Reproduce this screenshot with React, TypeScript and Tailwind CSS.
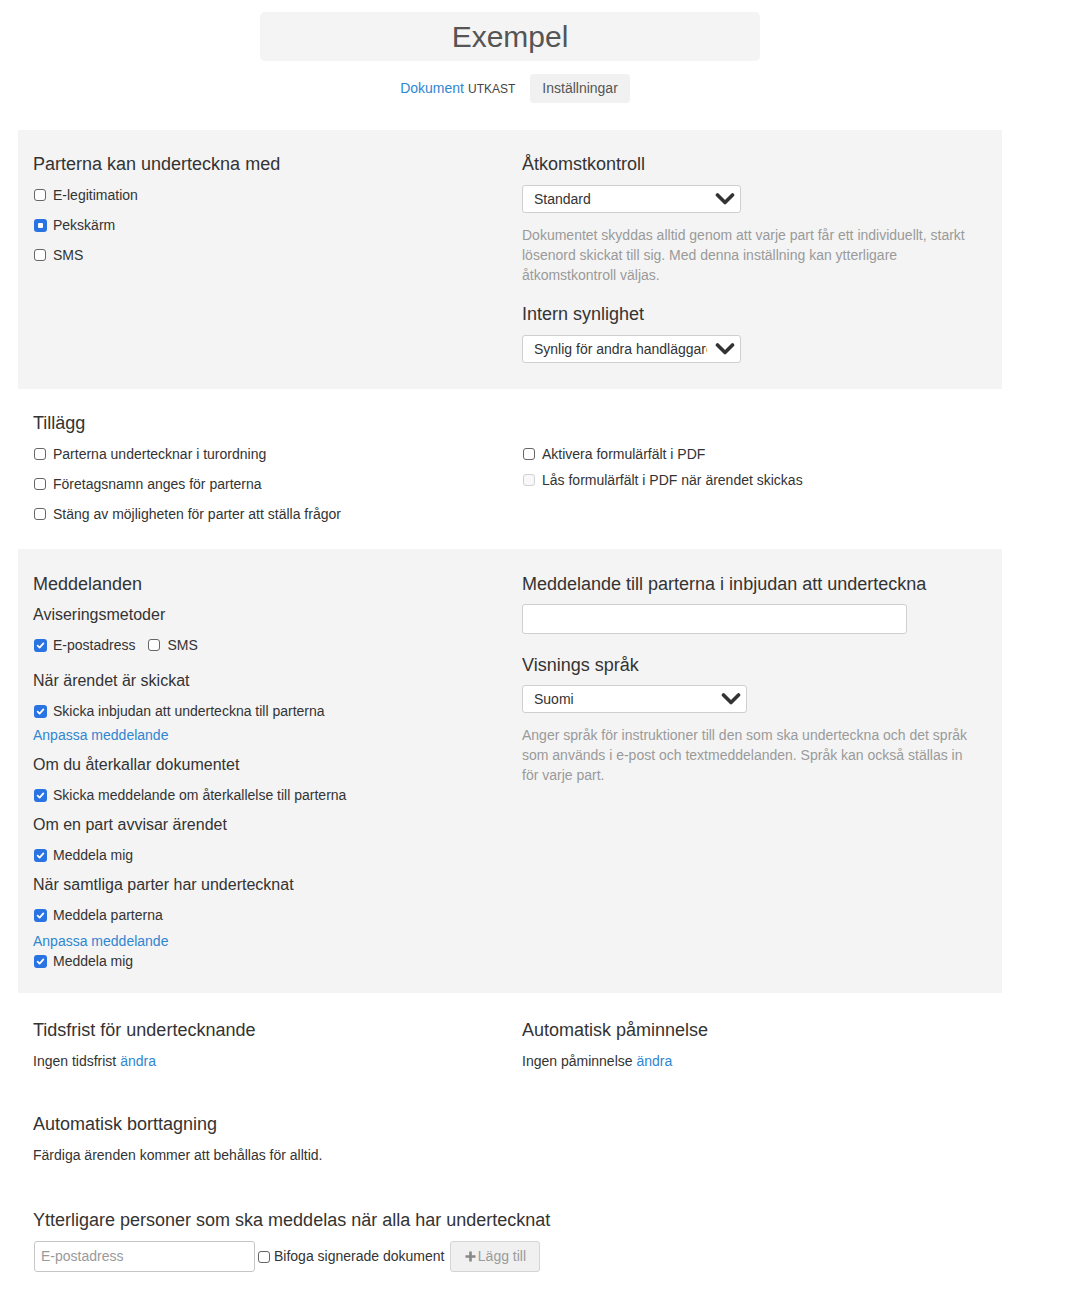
import React from "react";

const Box = ({ state }: { state: "on" | "off" | "radio" | "disabled" }) => {
  if (state === "on")
    return (
      <span className="inline-flex w-[13px] h-[13px] rounded-[3px] bg-[#2a73e3] items-center justify-center shrink-0 -mr-px">
        <svg width="9" height="9" viewBox="0 0 10 10">
          <path d="M1.8 5.2 L4 7.4 L8.2 2.6" fill="none" stroke="white" strokeWidth="1.9" strokeLinecap="round" strokeLinejoin="round" />
        </svg>
      </span>
    );
  if (state === "radio")
    return (
      <span className="inline-flex w-[13px] h-[13px] rounded-[3px] bg-[#2a73e3] items-center justify-center shrink-0 -mr-px">
        <span className="w-[5px] h-[5px] bg-white rounded-[1px]" />
      </span>
    );
  if (state === "disabled")
    return <span className="inline-block w-[12px] h-[12px] rounded-[3px] border-[1.5px] border-[#d0d0d0] bg-[#f8f8f8] shrink-0" />;
  return <span className="inline-block w-[12px] h-[12px] rounded-[3px] border-[1.5px] border-[#666] bg-white shrink-0" />;
};

const Check = ({ state = "off", label, className = "" }: { state?: "on" | "off" | "radio" | "disabled"; label: string; className?: string }) => (
  <div className={`flex items-center h-[20px] leading-[20px] text-[14px] text-[#333] pl-px gap-[7px] ${className}`}>
    <Box state={state} />
    <span>{label}</span>
  </div>
);

const H = ({ children, className = "" }: { children: React.ReactNode; className?: string }) => (
  <div className={`text-[18px] leading-[20px] text-[#333] ${className}`}>{children}</div>
);
const Sub = ({ children, className = "" }: { children: React.ReactNode; className?: string }) => (
  <div className={`text-[16px] leading-[20px] text-[#333] ${className}`}>{children}</div>
);
const Link = ({ children, className = "" }: { children: React.ReactNode; className?: string }) => (
  <div className={`text-[14px] leading-[20px] text-[#2f86d1] ${className}`}>{children}</div>
);
const Help = ({ children, className = "" }: { children: React.ReactNode; className?: string }) => (
  <div className={`text-[14px] leading-[20px] text-[#9a9a9a] ${className}`}>{children}</div>
);

const Chevron = () => (
  <svg width="20" height="14" viewBox="0 0 20 14" className="shrink-0 ml-[8px]">
    <polyline points="2.5,3 10,10.5 17.5,3" fill="none" stroke="#333" strokeWidth="3.6" strokeLinecap="round" strokeLinejoin="round" />
  </svg>
);

const Select = ({ value, width, className = "" }: { value: string; width: string; className?: string }) => (
  <div className={`h-[28px] ${width} bg-white border-[1.5px] border-[#cfcfcf] rounded-[3px] flex items-center pl-[11px] pr-[5px] ${className}`}>
    <span className="flex-1 overflow-hidden whitespace-nowrap text-[14px] text-[#333]">{value}</span>
    <Chevron />
  </div>
);

export default function App() {
  return (
    <div className="w-[1076px] min-h-[1310px] bg-white" style={{ fontFamily: '"Liberation Sans", Arial, sans-serif' }}>
      <div className="w-[1020px]">
        {/* Title */}
        <div className="pt-[12px] flex justify-center">
          <div className="w-[500px] h-[49px] bg-[#f4f4f4] rounded-[5px] flex items-center justify-center text-[30px] text-[#555]">Exempel</div>
        </div>
        {/* Tabs */}
        <div className="mt-[13px] flex justify-center items-center h-[29px] pl-[10px]">
          <div className="flex items-baseline mr-[15px]">
            <span className="text-[14px] text-[#2f86d1]">Dokument</span>
            <span className="text-[12px] text-[#444] ml-[4px]">UTKAST</span>
          </div>
          <div className="h-[29px] px-[12px] flex items-center bg-[#f1f1f1] rounded-[4px] text-[14px] text-[#555]">Inställningar</div>
        </div>
      </div>

      <div className="w-[984px] ml-[18px] mt-[27px]">
        {/* Section 1 */}
        <div className="bg-[#f4f4f4] grid grid-cols-2">
          <div className="pl-[15px] pt-[24px]">
            <H>Parterna kan underteckna med</H>
            <Check className="mt-[11px]" label="E-legitimation" />
            <Check className="mt-[10px]" state="radio" label="Pekskärm" />
            <Check className="mt-[10px]" label="SMS" />
          </div>
          <div className="pl-[12px] pt-[24px] pb-[26px]">
            <H>Åtkomstkontroll</H>
            <Select className="mt-[11px]" width="w-[219px]" value="Standard" />
            <Help className="mt-[12px] pr-[20px]">
              Dokumentet skyddas alltid genom att varje part får ett individuellt, starkt lösenord skickat till sig. Med denna inställning kan ytterligare åtkomstkontroll väljas.
            </Help>
            <H className="mt-[19px]">Intern synlighet</H>
            <Select className="mt-[11px]" width="w-[219px]" value="Synlig för andra handläggare" />
          </div>
        </div>

        {/* Section 2 */}
        <div className="grid grid-cols-2">
          <div className="pl-[15px] pt-[24px] pb-[24px]">
            <H>Tillägg</H>
            <Check className="mt-[11px]" label="Parterna undertecknar i turordning" />
            <Check className="mt-[10px]" label="Företagsnamn anges för parterna" />
            <Check className="mt-[10px]" label="Stäng av möjligheten för parter att ställa frågor" />
          </div>
          <div className="pl-[12px] pt-[55px]">
            <Check label="Aktivera formulärfält i PDF" />
            <Check className="mt-[6px]" state="disabled" label="Lås formulärfält i PDF när ärendet skickas" />
          </div>
        </div>

        {/* Section 3 */}
        <div className="bg-[#f4f4f4] grid grid-cols-2 mt-px">
          <div className="pl-[15px] pt-[25px] pb-[22px]">
            <H>Meddelanden</H>
            <Sub className="mt-[11px]">Aviseringsmetoder</Sub>
            <div className="flex items-center mt-[10px]">
              <Check state="on" label="E-postadress" />
              <Check className="ml-[12px]" label="SMS" />
            </div>
            <Sub className="mt-[16px]">När ärendet är skickat</Sub>
            <Check className="mt-[10px]" state="on" label="Skicka inbjudan att underteckna till parterna" />
            <Link className="mt-[4px]">Anpassa meddelande</Link>
            <Sub className="mt-[10px]">Om du återkallar dokumentet</Sub>
            <Check className="mt-[10px]" state="on" label="Skicka meddelande om återkallelse till parterna" />
            <Sub className="mt-[10px]">Om en part avvisar ärendet</Sub>
            <Check className="mt-[10px]" state="on" label="Meddela mig" />
            <Sub className="mt-[10px]">När samtliga parter har undertecknat</Sub>
            <Check className="mt-[10px]" state="on" label="Meddela parterna" />
            <Link className="mt-[6px]">Anpassa meddelande</Link>
            <Check state="on" label="Meddela mig" />
          </div>
          <div className="pl-[12px] pt-[25px]">
            <H>Meddelande till parterna i inbjudan att underteckna</H>
            <div className="mt-[10px] w-[385px] h-[30px] bg-white border-[1.5px] border-[#cfcfcf] rounded-[3px]" />
            <H className="mt-[21px]">Visnings språk</H>
            <Select className="mt-[10px]" width="w-[225px]" value="Suomi" />
            <Help className="mt-[12px] pr-[20px]">
              Anger språk för instruktioner till den som ska underteckna och det språk som används i e-post och textmeddelanden. Språk kan också ställas in för varje part.
            </Help>
          </div>
        </div>

        {/* Section 4 */}
        <div className="grid grid-cols-2 pt-[27px]">
          <div className="pl-[15px]">
            <H>Tidsfrist för undertecknande</H>
            <div className="mt-[11px] text-[14px] leading-[20px] text-[#333]">
              Ingen tidsfrist <span className="text-[#2f86d1]">ändra</span>
            </div>
          </div>
          <div className="pl-[12px]">
            <H>Automatisk påminnelse</H>
            <div className="mt-[11px] text-[14px] leading-[20px] text-[#333]">
              Ingen påminnelse <span className="text-[#2f86d1]">ändra</span>
            </div>
          </div>
        </div>
        <div className="pl-[15px] mt-[43px]">
          <H>Automatisk borttagning</H>
          <div className="mt-[11px] text-[14px] leading-[20px] text-[#333]">Färdiga ärenden kommer att behållas för alltid.</div>
        </div>
        <div className="pl-[15px] mt-[45px]">
          <H>Ytterligare personer som ska meddelas när alla har undertecknat</H>
          <div className="mt-[11px] flex items-center h-[31px]">
            <div className="ml-px w-[221px] h-[31px] border-[1.5px] border-[#c6c6c6] rounded-[3px] bg-white flex items-center pl-[6px] text-[14px] text-[#9a9a9a]">E-postadress</div>
            <div className="flex items-center ml-[3px] gap-[4px] text-[14px] text-[#333]">
              <Box state="off" />
              <span>Bifoga signerade dokument</span>
            </div>
            <div className="ml-[6px] w-[90px] h-[31px] bg-[#f0f0f0] border-[1.5px] border-[#d4d4d4] rounded-[3px] flex items-center justify-center text-[14px] text-[#9a9a9a]">
              <svg width="11" height="11" viewBox="0 0 11 11" className="mr-[2px]">
                <path d="M5.5 0.5 V10.5 M0.5 5.5 H10.5" stroke="#888" strokeWidth="2.6" />
              </svg>
              Lägg till
            </div>
          </div>
        </div>
      </div>
    </div>
  );
}
